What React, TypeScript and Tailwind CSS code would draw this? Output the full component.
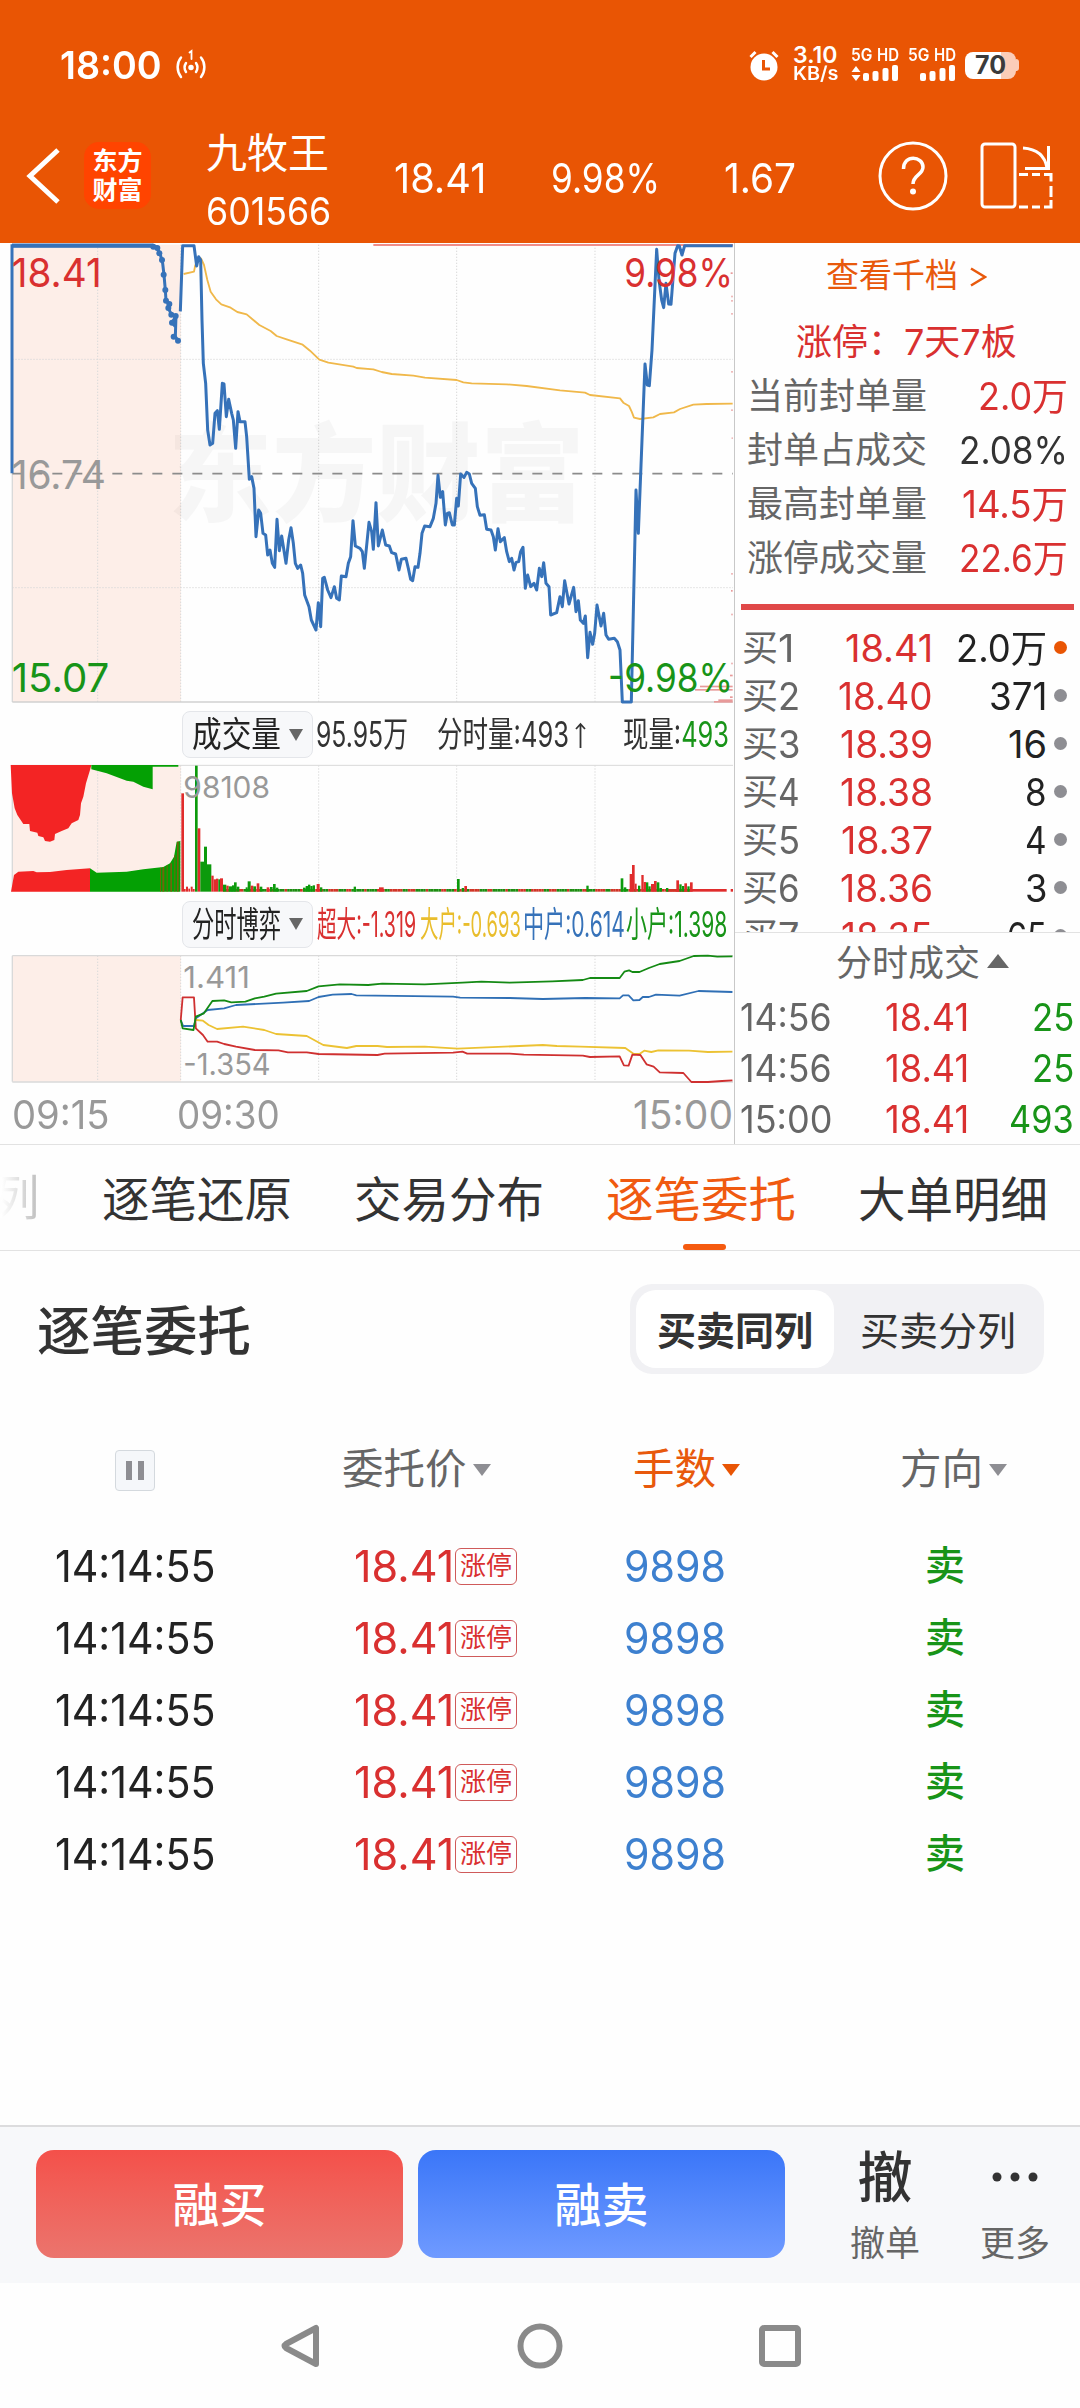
import { useLayoutEffect, useRef, useState } from 'react';
import clsx from 'clsx';

// ─── Data ─────────────────────────────────────────────────────────────────────

const SEAL_STATS = [
  { label: '当前封单量', value: '2.0万', width: 90, up: true },
  { label: '封单占成交', value: '2.08%', width: 109, up: false },
  { label: '最高封单量', value: '14.5万', width: 106, up: true },
  { label: '涨停成交量', value: '22.6万', width: 109, up: true },
];

const BIDS = [
  { level: '1', price: '18.41', pw: 88, lots: '2.0万', lw: 91 },
  { level: '2', price: '18.40', pw: 95, lots: '371', lw: 58 },
  { level: '3', price: '18.39', pw: 93, lots: '16', lw: 39 },
  { level: '4', price: '18.38', pw: 93, lots: '8', lw: 22 },
  { level: '5', price: '18.37', pw: 92, lots: '4', lw: 22 },
  { level: '6', price: '18.36', pw: 93, lots: '3', lw: 22 },
  { level: '7', price: '18.35', pw: 92, lots: '65', lw: 40 },
];

const TRADES = [
  { time: '14:56', lots: '25', lw: 42 },
  { time: '14:56', lots: '25', lw: 42 },
  { time: '15:00', lots: '493', lw: 65 },
];

const TABS = ['逐笔还原', '交易分布', '逐笔委托', '大单明细'];

const ORDERS = Array.from({ length: 5 }, (_, i) => ({ id: i, time: '14:14:55', price: '18.41', lots: '9898' }));

const AUCTION_LINE =
  '36,700 36,17 450,17 468,20 480,40 488,70 492,105 496,150 498,182 510,195 505,205 515,225 528,228 516,248 526,260 528,228 526,290 534,302';
const AUCTION_DOTS = [
  [460, 20], [472, 24], [478, 40], [486, 60], [491, 104], [496, 150], [498, 182], [508, 192],
  [505, 204], [514, 224], [527, 228], [516, 248], [521, 290], [534, 302],
];

const PRICE_LINE =
  '541,214 548,17 582,17 590,78 596,50 602,60 606,240 610,370 617,430 623,570 630,615 638,610 645,520 652,512 658,568 667,430 672,432 679,530 686,478 695,520 700,540 707,625 714,515 720,545 735,545 740,590 748,718 755,710 762,745 768,890 776,810 782,820 789,880 797,885 803,945 810,930 817,970 824,982 831,838 838,932 845,888 858,970 866,900 873,863 880,910 886,970 893,985 902,975 908,1000 914,1065 927,1100 934,1140 948,1170 955,1088 962,1160 968,1015 973,1012 983,1050 993,1073 1003,1040 1010,1075 1018,1080 1024,1008 1038,1010 1045,970 1052,950 1059,842 1066,918 1080,925 1087,935 1093,985 1107,847 1115,875 1120,928 1128,788 1135,918 1147,870 1157,915 1168,918 1175,938 1187,942 1197,990 1204,958 1218,955 1225,985 1232,1018 1238,1022 1245,980 1254,982 1260,940 1266,880 1274,858 1290,860 1300,835 1308,790 1314,706 1321,772 1328,755 1336,855 1342,820 1348,818 1357,855 1363,855 1370,775 1375,798 1382,702 1392,712 1400,697 1408,702 1415,730 1426,745 1432,800 1440,826 1453,824 1460,868 1473,870 1480,890 1486,930 1494,866 1501,905 1513,893 1520,935 1528,965 1535,955 1542,990 1548,967 1556,965 1562,935 1569,922 1576,1045 1583,1005 1592,1040 1602,1030 1610,1050 1618,985 1625,1010 1631,968 1638,1030 1647,1040 1652,1125 1670,1118 1680,1070 1687,1100 1694,1022 1707,1092 1721,1042 1728,1115 1735,1082 1741,1140 1750,1150 1756,1128 1763,1253 1770,1177 1778,1213 1784,1180 1791,1095 1803,1158 1811,1120 1818,1185 1826,1198 1843,1195 1852,1205 1860,1230 1867,1386 1894,1386 1908,750 1915,880 1935,372 1942,435 1948,437 1956,330 1970,28 1977,120 1985,180 1991,203 1998,130 2006,192 2013,193 2025,40 2033,17 2038,18 2046,45 2054,17 2198,17';

const AVERAGE_LINE =
  '551,102 582,95 586,75 603,55 612,75 622,120 632,155 648,178 664,193 692,203 712,216 740,223 760,240 778,255 812,273 830,288 860,298 908,314 930,332 958,359 985,368 1060,380 1070,384 1120,388 1145,396 1175,402 1240,407 1275,413 1370,420 1390,427 1415,430 1520,433 1580,438 1680,451 1755,458 1770,465 1860,475 1870,488 1887,498 1895,515 1902,533 1920,537 1960,532 1980,522 2022,517 2040,507 2080,494 2120,492 2198,491';

// [x, width, y] ticks of the chip distribution along the right edge
const CHIP_TICKS = [
  [2180, 18, 17], [2192, 6, 100], [2194, 4, 170], [2194, 4, 183], [2194, 4, 222], [2194, 4, 396], [2194, 4, 511],
  [2195, 3, 595], [2194, 4, 1002], [2193, 5, 1053], [2194, 4, 1124], [2194, 4, 1271], [2190, 8, 1307],
  [2100, 98, 1340], [2085, 113, 1350], [2190, 8, 1372], [2155, 43, 1381], [2142, 56, 1386],
];

// [x, top, width, colour]
const VOLUME_BARS: [number, number, number, 'r' | 'g'][] = [
  [544, 100, 8, 'r'], [552, 387, 5, 'r'], [558, 380, 6, 'r'], [565, 386, 5, 'r'], [572, 380, 6, 'r'], [578, 387, 6, 'r'],
  [585, 17, 8, 'g'], [593, 205, 8, 'r'], [601, 305, 11, 'g'], [612, 260, 9, 'g'], [621, 313, 13, 'g'],
  [634, 347, 7, 'r'], [641, 358, 7, 'r'], [648, 356, 7, 'r'], [655, 358, 5, 'g'], [660, 355, 9, 'r'],
  [669, 374, 10, 'g'], [679, 377, 7, 'r'], [686, 379, 10, 'g'], [696, 376, 6, 'g'], [702, 367, 8, 'g'], [710, 380, 8, 'g'],
  [737, 382, 6, 'g'], [743, 364, 9, 'g'], [752, 377, 8, 'r'], [760, 379, 8, 'g'], [770, 370, 8, 'r'], [779, 380, 8, 'g'],
  [800, 382, 8, 'r'], [810, 381, 8, 'g'], [819, 372, 8, 'g'], [827, 383, 8, 'g'], [909, 383, 8, 'g'], [917, 378, 7, 'g'],
  [924, 374, 7, 'g'], [931, 378, 7, 'g'], [938, 376, 7, 'g'], [950, 372, 9, 'r'], [960, 382, 7, 'g'], [1061, 380, 7, 'g'],
  [1137, 382, 14, 'r'], [1371, 357, 8, 'g'], [1385, 384, 7, 'g'], [1393, 378, 8, 'r'], [1759, 377, 7, 'g'],
  [1862, 355, 8, 'g'], [1871, 382, 8, 'g'], [1889, 342, 7, 'r'], [1896, 315, 8, 'r'], [1904, 371, 6, 'r'],
  [1914, 377, 7, 'g'], [1924, 345, 7, 'r'], [1931, 366, 7, 'r'], [1938, 367, 7, 'g'], [1945, 379, 7, 'g'], [1953, 372, 9, 'r'],
  [1962, 363, 8, 'r'], [1970, 367, 8, 'g'], [1978, 384, 8, 'g'], [1998, 384, 7, 'g'], [2029, 361, 8, 'r'], [2038, 373, 7, 'g'],
  [2046, 378, 7, 'g'], [2053, 370, 8, 'r'], [2062, 379, 7, 'g'], [2070, 367, 8, 'r'],
];

const FLOWS = [
  { color: '#2f6fb5', points: '383,390 388,408 411,408 415,385 440,360 475,355 500,345 600,338 655,333 675,321 705,314 745,312 755,316 960,320 975,323 1080,324 1150,327 1240,324 1313,325 1320,316 1332,316 1342,331 1355,330 1362,321 1375,321 1390,314 1440,317 1480,303 1552,306' },
  { color: '#ecc233', points: '415,390 430,392 442,405 460,417 515,410 560,420 585,432 650,438 685,465 735,474 755,468 800,468 820,471 900,470 970,476 1150,465 1180,468 1230,470 1325,474 1343,492 1355,492 1365,482 1380,486 1395,481 1460,482 1500,486 1552,485' },
  { color: '#cf3030', points: '383,390 387,322 411,322 415,415 430,435 440,455 460,455 475,462 500,470 540,480 590,481 610,487 650,487 675,492 800,495 815,491 960,488 980,485 990,491 1080,491 1110,494 1235,497 1250,501 1313,499 1322,526 1332,527 1340,494 1357,495 1370,523 1385,530 1398,547 1448,549 1465,576 1500,576 1530,573 1552,571' },
  { color: '#148a14', points: '383,390 387,415 410,420 415,380 432,370 450,333 475,331 490,337 520,335 540,325 560,320 585,311 650,303 675,289 720,283 780,285 810,281 900,283 980,278 1020,275 1080,278 1170,274 1235,270 1250,264 1313,264 1323,245 1333,241 1340,246 1355,246 1375,234 1398,222 1440,213 1470,198 1500,197 1520,200 1552,199' },
];

// ─── Text ─────────────────────────────────────────────────────────────────────

// Squeezes a single line of text into a fixed width, the way the quote labels do.
function Fit({ width, className, children }: { width: number; className?: string; children: React.ReactNode }) {
  const ref = useRef<HTMLSpanElement>(null);
  const [scale, setScale] = useState(1);

  useLayoutEffect(() => {
    if (ref.current) setScale(width / ref.current.offsetWidth);
  }, [width]);

  return (
    <span className={clsx('inline-block shrink-0 whitespace-nowrap text-left', className)} style={{ width }}>
      <span ref={ref} className="inline-block origin-left" style={{ transform: `scaleX(${scale})` }}>
        {children}
      </span>
    </span>
  );
}

function ChartLabel({ x, y, width, size, fill, children }: {
  x: number; y: number; width: number; size: number; fill: string; children: string;
}) {
  return (
    <text x={x} y={y} fontSize={size} fill={fill} textLength={width} lengthAdjust="spacingAndGlyphs">
      {children}
    </text>
  );
}

// ─── Header ───────────────────────────────────────────────────────────────────

function SignalBars({ data }: { data?: boolean }) {
  return (
    <div className="flex w-12 flex-col">
      <div className="flex justify-between text-[17px] leading-[14px] font-semibold">
        <Fit width={21}>5G</Fit>
        <Fit width={22}>HD</Fit>
      </div>
      <svg className="mt-[2px]" width="48" height="18" viewBox="0 0 48 18" fill="#fff">
        {data && <path d="M0.5 8 5 2l4.500 6zM0.500 11h9L5 17z" />}
        <rect x="12" y="9" width="6" height="8" rx="2" />
        <rect x="21.500" y="7" width="6" height="10" rx="2" />
        <rect x="31.500" y="4" width="6" height="13" rx="2" />
        <rect x="41" y="1" width="6" height="16" rx="2" />
      </svg>
    </div>
  );
}

function StatusBar() {
  return (
    <div className="flex h-[64px] items-center pl-[60px] text-white">
      <Fit width={102} className="text-[38px] font-semibold">18:00</Fit>
      <svg className="ml-[12px] -mt-px" width="34" height="32" viewBox="0 0 34 32" fill="none" stroke="#fff" strokeWidth="2.500" strokeLinecap="round">
        <path d="M7 8.500C2.500 14 2.500 22 7 28M12 14c-2 3-2 6 0 9M27 8.500c4.500 5.500 4.500 13.500 0 19.500M22 14c2 3 2 6 0 9" />
        <circle cx="17" cy="18.500" r="1.500" fill="#fff" />
        <path d="M15.500 3.500 17.500 2V10" strokeWidth="1.800" />
      </svg>
      <svg className="ml-[541px]" width="30" height="31" viewBox="0 0 30 31" fill="none">
        <circle cx="15" cy="17" r="13.500" fill="#fff" />
        <path d="M1.500 7 6.500 2M28.500 7l-5-5" stroke="#fff" strokeWidth="3" />
        <path d="M14.500 10v9h6.500" stroke="#e95504" strokeWidth="3" />
      </svg>
      <div className="-mt-px ml-[14px] flex w-[46px] flex-col font-semibold">
        <Fit width={44} className="text-[23px] leading-[18px]">3.10</Fit>
        <Fit width={46} className="text-[19px] leading-[20px]">KB/s</Fit>
      </div>
      <div className="ml-[12px] flex gap-[9px]">
        <SignalBars data />
        <SignalBars />
      </div>
      <div className="ml-[9px] flex items-center">
        <div className="flex h-[27px] w-[51px] items-center justify-center rounded-lg bg-linear-to-r from-white from-70% to-[#fbcdb8] to-70% text-[#3b3b3b]">
          <Fit width={31} className="text-[25px] font-bold leading-none">70</Fit>
        </div>
        <div className="h-3 w-[3px] rounded-r bg-[#fbcdb8]" />
      </div>
    </div>
  );
}

function TitleBar() {
  return (
    <div className="flex h-[135px] items-center text-[41px] text-white">
      <svg className="ml-[25px]" width="36" height="58" viewBox="0 0 36 58" fill="none" stroke="#fff" strokeWidth="5">
        <path d="M33 3 5 29l28 26" />
      </svg>
      <div className="ml-[23px] flex size-[67px] flex-col items-center justify-center rounded-[15px] bg-[#ff4400] text-[25px] font-bold leading-[29px]">
        <span>东方</span>
        <span>财富</span>
      </div>
      <div className="ml-[55px] flex w-[126px] flex-col pt-[12px] leading-[58px]">
        <span>九牧王</span>
        <Fit width={125} className="text-[38px]">601566</Fit>
      </div>
      <div className="ml-[62px] flex w-[484px] items-center pt-[6px]">
        <Fit width={92}>18.41</Fit>
        <Fit width={109} className="ml-[65px]">9.98%</Fit>
        <Fit width={72} className="ml-[64px]">1.67</Fit>
      </div>
      <svg width="70" height="70" viewBox="0 0 70 70" fill="none" stroke="#fff" strokeWidth="3">
        <circle cx="35" cy="35" r="33" />
        <path d="M25.500 28c0-15 19.500-13 19.500-2 0 8-10 8-10 17" strokeWidth="3.500" />
        <circle cx="35" cy="50.500" r="3" fill="#fff" stroke="none" />
      </svg>
      <svg className="ml-[32px]" width="74" height="68" viewBox="0 0 74 68" fill="none" stroke="#fff" strokeWidth="3">
        <rect x="2" y="2" width="33" height="63" rx="3" />
        <path d="M43 6c15 1 22 8 24 20M68.500 4v22.500H45" />
        <path d="M39 32.500h9M52 32.500h8M64 32.500h7v7M71 44v11M71 58v7h-7M60 65h-8M48 65h-9" />
      </svg>
    </div>
  );
}

// ─── Charts ───────────────────────────────────────────────────────────────────
// All three share one x scale: 3 units per pixel, plot area from 36 to 2199.

function Grid({ top, bottom }: { top: number; bottom: number }) {
  return (
    <g fill="none" stroke="#d9d9d9" strokeWidth="3">
      <rect x="37" y={top} width="506" height={bottom - top} fill="#fdeee8" stroke="none" />
      <path d={`M37 ${top}V${bottom}`} strokeWidth="4" />
      {[293, 542, 956, 1370, 1785].map((x) => (
        <path key={x} d={`M${x} ${top}V${bottom}`} strokeDasharray="4 5" />
      ))}
    </g>
  );
}

function PriceChart() {
  return (
    <svg className="block" width="734" height="462" viewBox="0 9 2202 1386">
      <Grid top={14} bottom={1386} />
      <text x="504" y="820" fontSize="320" fontWeight="900" fill="#000" opacity="0.028" textLength="1250" lengthAdjust="spacingAndGlyphs">东方财富</text>
      <g fill="none" stroke="#d9d9d9" strokeWidth="3">
        <path d="M37 358H2199M37 1043H2199" strokeDasharray="4 5" />
        <path d="M37 1386H2199" stroke="#d0d0d0" strokeWidth="5" />
        <path d="M37 701H2199" stroke="#8c8c8c" strokeWidth="5" strokeDasharray="30 30" />
        <path d="M1120 15H2199" stroke="#f08c88" strokeWidth="6" />
      </g>
      <g fill="#e89a9a">
        {CHIP_TICKS.map(([x, w, y]) => (
          <rect key={y} x={x} y={y - 3} width={w} height="5" />
        ))}
      </g>
      <polyline points={AVERAGE_LINE} fill="none" stroke="#f0b84a" strokeWidth="5.500" strokeLinejoin="round" />
      <g fill="none" stroke="#3672b9" strokeWidth="9">
        <polyline points={AUCTION_LINE} />
        <path d="M36 17H460" strokeWidth="13" />
        <polyline points={PRICE_LINE} strokeLinejoin="round" />
      </g>
      <g fill="#3672b9">
        {AUCTION_DOTS.map(([x, y]) => (
          <circle key={`${x}-${y}`} cx={x} cy={y} r="9" />
        ))}
      </g>
      <ChartLabel x={35} y={142} width={270} size={120} fill="#d93030">18.41</ChartLabel>
      <ChartLabel x={35} y={748} width={283} size={120} fill="#999">16.74</ChartLabel>
      <ChartLabel x={35} y={1357} width={293} size={120} fill="#189418">15.07</ChartLabel>
      <ChartLabel x={1873} y={142} width={326} size={120} fill="#d93030">9.98%</ChartLabel>
      <ChartLabel x={1824} y={1357} width={375} size={120} fill="#189418">-9.98%</ChartLabel>
    </svg>
  );
}

function VolumeChart() {
  // flat minutes between the named bars
  const floor = Array.from({ length: 182 }, (_, i) => ({ x: 669 + i * 7.7, red: i > 160 || (i * 7 + (i % 5) * 3) % 11 < 5 }));
  return (
    <svg className="block" width="734" height="130" viewBox="0 12 2202 390">
      <Grid top={16} bottom={394} />
      <path d="M33 16H2199" stroke="#d9d9d9" strokeWidth="3" />
      <g fill="#f32424">
        <path d="M32 15 36 100 44 145 52 165 62 180 70 192H88L90 213 112 218 115 228 130 232 135 243 150 245 163 240 165 222 185 213 205 205 215 190 235 180 240 165 243 130 250 110 258 70 270 30 274 15Z" />
        <path d="M33 395 42 345 55 335 100 333 110 337 150 336 200 330 270 325V395Z" />
      </g>
      <g fill="#04a004">
        <path d="M274 15V28L320 40 380 62 400 65 430 80 458 88V20H535V15Z" />
        <path d="M270 325 290 338 380 335 430 328 490 321 510 310 522 290 530 245 541 243V395H270Z" />
      </g>
      <path d="M480 323h3v72h-3zM487 322h6v73h-6zM500 316h3v79h-3zM511 310h5v85h-5zM523 285h3v110h-3zM531 245h5v150h-5z" fill="#a04a10" opacity="0.7" />
      <rect x="2002" y="387" width="178" height="8" fill="#e02c2c" />
      <rect x="2192" y="387" width="7" height="8" fill="#e02c2c" />
      {floor.map((b) => (
        <rect key={b.x} x={b.x} y="387" width="7.7" height="8" fill={b.red ? '#d03426' : '#1c8c10'} />
      ))}
      {VOLUME_BARS.map(([x, top, w, c]) => (
        <rect key={x} x={x} y={top} width={w} height={395 - top} fill={c === 'r' ? '#e02c2c' : '#0c9a0c'} />
      ))}
      <ChartLabel x={550} y={113} width={260} size={90} fill="#999">98108</ChartLabel>
    </svg>
  );
}

function FlowChart() {
  return (
    <svg className="block" width="734" height="130" viewBox="0 192 2202 390">
      <Grid top={197} bottom={575} />
      <path d="M37 197H2199M37 576H2199" stroke="#d9d9d9" strokeWidth="4" />
      <g transform="scale(1.4158 1)" fill="none" strokeWidth="1.800" strokeLinejoin="round">
        {FLOWS.map((f) => (
          <polyline key={f.color} points={f.points} stroke={f.color} vectorEffect="non-scaling-stroke" />
        ))}
      </g>
      <ChartLabel x={550} y={294} width={200} size={90} fill="#999">1.411</ChartLabel>
      <ChartLabel x={550} y={555} width={262} size={90} fill="#999">-1.354</ChartLabel>
    </svg>
  );
}

function IndicatorButton({ label }: { label: string }) {
  return (
    <button className="ml-[182px] flex h-[47px] w-[131px] shrink-0 items-center rounded-lg border border-[#e4e6ea] bg-[#f7f8fa] pl-[9px] text-[#222]">
      <Fit width={89}>{label}</Fit>
      <svg className="ml-[8px]" width="14" height="12" viewBox="0 0 14 12"><path d="M0 0h14L7 12z" fill="#666" /></svg>
    </button>
  );
}

function ChartPanel() {
  return (
    <div className="w-[735px] border-r border-[#c8c8c8] text-[35px] text-[#333]">
      <PriceChart />
      <div className="flex h-[59px] items-center">
        <IndicatorButton label="成交量" />
        <Fit width={92} className="ml-[3px]">95.95万</Fit>
        <Fit width={132} className="ml-[29px]">分时量:493</Fit>
        <svg className="ml-[5px]" width="13" height="26" viewBox="0 0 13 26" fill="none" stroke="#333" strokeWidth="1.800">
          <path d="M6.500 26V2M2 7l4.500-5L11 7" />
        </svg>
        <Fit width={106} className="ml-[36px]">现量:<span className="text-[#189418]">493</span></Fit>
      </div>
      <VolumeChart />
      <div className="flex h-[60px] items-center">
        <IndicatorButton label="分时博弈" />
        <Fit width={99} className="ml-[4px] text-[#d93030]">超大:-1.319</Fit>
        <Fit width={101} className="ml-[4px] text-[#e9bd2c]">大户:-0.693</Fit>
        <Fit width={102} className="ml-[2px] text-[#3672b9]">中户:0.614</Fit>
        <Fit width={101} className="ml-px text-[#189418]">小户:1.398</Fit>
      </div>
      <FlowChart />
      <div className="flex h-[60px] items-center pl-[12px] pt-[2px] text-[39px] text-[#999]">
        <Fit width={98}>09:15</Fit>
        <Fit width={103} className="ml-[67px]">09:30</Fit>
        <Fit width={100} className="ml-auto mr-px">15:00</Fit>
      </div>
    </div>
  );
}

// ─── Quote side panel ─────────────────────────────────────────────────────────

function QuotePanel() {
  return (
    <div className="flex flex-1 flex-col text-[36px] leading-none text-[#666]">
      <div className="mt-[16px] flex h-[34px] items-center pl-[91px] text-[33px] text-[#e8590c]">
        查看千档
        <svg className="ml-[12px] mt-[2px]" width="17" height="20" viewBox="0 0 17 20" fill="none" stroke="#e8590c" strokeWidth="2.500"><path d="M1 1.500 15 10 1 18.500" /></svg>
      </div>
      <div className="mt-[29px] flex h-[40px] items-center pl-[61px] text-[#d93030]">
        <Fit width={221}>涨停：7天7板</Fit>
      </div>
      <div className="mt-[7px]">
        {SEAL_STATS.map((s) => (
          <div key={s.label} className="flex h-[54px] items-center justify-between pl-[12px] pr-[12px]">
            <span>{s.label}</span>
            <Fit width={s.width} className={clsx('text-[38px]', s.up ? 'text-[#d93030]' : 'text-[#333]')}>{s.value}</Fit>
          </div>
        ))}
      </div>
      <div className="mx-[6px] mt-[19px] h-[6px] bg-[#e04848]" />
      <div className="h-[324px] overflow-hidden border-b border-[#e2e2e2] pt-[14px]">
        {BIDS.map((b, i) => (
          <div key={b.level} className="flex h-[48px] items-center pl-[7px] pr-[13px] text-[38px]">
            <span className="text-[36px]">买</span>
            <Fit width={b.level === '1' ? 16 : 22}>{b.level}</Fit>
            <div className="flex flex-1 justify-end text-[#d93030]"><Fit width={b.pw}>{b.price}</Fit></div>
            <div className="flex w-[114px] justify-end text-[#222]"><Fit width={b.lw}>{b.lots}</Fit></div>
            <span className={clsx('ml-[7px] size-[13px] rounded-full', i === 0 ? 'bg-[#e95504]' : 'bg-[#8e8e93]')} />
          </div>
        ))}
      </div>
      <div className="flex h-[58px] items-center pl-[101px] pt-px">
        分时成交
        <svg className="ml-[7px] -mt-1" width="22" height="14" viewBox="0 0 22 14"><path d="M11 0 22 14H0z" fill="#666" /></svg>
      </div>
      {TRADES.map((t, i) => (
        <div key={i} className="flex h-[51px] items-center pl-[5px] pr-[6px] text-[38px]">
          <Fit width={92}>{t.time}</Fit>
          <Fit width={84} className="ml-[53px] text-[#d93030]">18.41</Fit>
          <Fit width={t.lw} className="ml-auto text-[#189418]">{t.lots}</Fit>
        </div>
      ))}
    </div>
  );
}

// ─── Tick orders ──────────────────────────────────────────────────────────────

function TabBar() {
  return (
    <div className="flex h-[107px] overflow-hidden border-y border-[#e2e2e2] text-[47.5px] leading-none text-[#333]">
      <span className="flex w-[102px] shrink-0 items-center">
        <span className="-ml-[8px] bg-linear-to-r from-white from-20% to-[#bbb] bg-clip-text text-transparent">列</span>
      </span>
      {TABS.map((tab) => {
        const active = tab === '逐笔委托';
        return (
          <div key={tab} className={clsx('flex w-[252px] shrink-0 flex-col', active && 'text-[#f05a10]')}>
            <span className="mt-[31px] h-[50px]">{tab}</span>
            {active && <span className="ml-[77px] mt-[18px] h-[6px] w-[43px] rounded-full bg-[#f55a0f]" />}
          </div>
        );
      })}
    </div>
  );
}

function SortHeader({ label, active }: { label: string; active?: boolean }) {
  return (
    <div className={clsx('flex items-center', active ? 'text-[#e8590c]' : 'text-[#666]')}>
      {label}
      <svg className="ml-[6px]" width="18" height="12" viewBox="0 0 18 12"><path d="M0 0h18L9 12z" fill={active ? '#e95504' : '#8e8e93'} /></svg>
    </div>
  );
}

const COLUMNS = 'grid grid-cols-[342px_291px_267px_180px] items-center';

function OrderTable() {
  return (
    <section className="h-[874px] leading-none">
      <div className="flex items-center justify-between pl-[37px] pr-[36px] pt-[33px]">
        <h2 className="pt-[5px] text-[53.5px] font-medium text-[#333]">逐笔委托</h2>
        <div className="flex h-[90px] w-[414px] rounded-[22px] bg-[#f1f1f4] p-[6px] text-[39px] text-[#333]">
          <button className="w-[198px] rounded-[20px] bg-white pt-[2px] font-bold">买卖同列</button>
          <button className="flex-1 pl-1 pt-[2px]">买卖分列</button>
        </div>
      </div>

      <div className={clsx(COLUMNS, 'mt-[64px] h-[64px] text-[41.5px]')}>
        <div className="ml-[115px] flex h-[41px] w-[40px] items-center justify-center gap-[6px] rounded border border-[#d4d9de] bg-[#f5f7fa]">
          <span className="h-[19px] w-[6px] bg-[#8e8e93]" />
          <span className="h-[19px] w-[6px] bg-[#8e8e93]" />
        </div>
        <SortHeader label="委托价" />
        <SortHeader label="手数" active />
        <SortHeader label="方向" />
      </div>

      <div className="mt-[28px] text-[44px]">
        {ORDERS.map((o) => (
          <div key={o.id} className={clsx(COLUMNS, 'h-[72px]')}>
            <Fit width={161} className="ml-[55px] text-[#222]">{o.time}</Fit>
            <div className="flex items-center pl-[12px] text-[#d93030]">
              <Fit width={100}>{o.price}</Fit>
              <span className="ml-px flex h-[37px] w-[62px] items-center justify-center rounded-md border border-[#cf5a5a] text-[26px]">涨停</span>
            </div>
            <Fit width={102} className="-ml-[9px] text-[#3d80cf]">{o.lots}</Fit>
            <span className="pl-[25px] text-[40px] font-medium text-[#189418]">卖</span>
          </div>
        ))}
      </div>
    </section>
  );
}

// ─── Bottom ───────────────────────────────────────────────────────────────────

function ActionBar() {
  return (
    <div className="flex h-[158px] border-t-2 border-[#dcdcde] bg-[#f7f8fa] pl-[36px] pt-[23px] leading-none">
      <button className="h-[108px] w-[367px] rounded-[18px] bg-linear-to-b from-[#f4504a] to-[#eb746d] text-[47px] font-medium text-white">融买</button>
      <button className="ml-[15px] h-[108px] w-[367px] rounded-[18px] bg-linear-to-b from-[#3a76f8] to-[#6f9aff] text-[47px] font-medium text-white">融卖</button>
      <div className="ml-[50px] flex w-[100px] flex-col items-center text-[35px] text-[#666]">
        <span className="text-[55px] font-medium text-[#333]">撤</span>
        <span className="mt-[21px]">撤单</span>
      </div>
      <div className="ml-[30px] flex w-[100px] flex-col items-center text-[35px] text-[#666]">
        <svg width="48" height="55" viewBox="0 0 48 55" fill="#333">
          <circle cx="6" cy="27" r="4.500" />
          <circle cx="24" cy="27" r="4.500" />
          <circle cx="42" cy="27" r="4.500" />
        </svg>
        <span className="mt-[21px]">更多</span>
      </div>
    </div>
  );
}

function NavBar() {
  return (
    <div className="flex h-[126px] items-center justify-between bg-[#fefefe] pb-px pl-[278px] pr-[278px]">
      <svg width="44" height="44" viewBox="0 0 44 44" fill="none" stroke="#8a8a8a" strokeWidth="6" strokeLinejoin="round">
        <path d="M38 4v36L8 24q-3-2 0-4z" />
      </svg>
      <svg width="46" height="46" viewBox="0 0 46 46" fill="none" stroke="#8a8a8a" strokeWidth="6">
        <circle cx="23" cy="23" r="19.500" />
      </svg>
      <svg width="44" height="44" viewBox="0 0 44 44" fill="none" stroke="#8a8a8a" strokeWidth="6">
        <rect x="4" y="4" width="36" height="36" rx="2" />
      </svg>
    </div>
  );
}

export default function App() {
  return (
    <div className="w-[1080px] overflow-hidden bg-[#fefefe] font-[Inter,'Noto_Sans_CJK_SC',sans-serif]">
      <header className="h-[243px] bg-[#e95504] pt-[33px]">
        <StatusBar />
        <div className="mt-[11px]">
          <TitleBar />
        </div>
      </header>
      <div className="flex h-[901px]">
        <ChartPanel />
        <QuotePanel />
      </div>
      <TabBar />
      <OrderTable />
      <ActionBar />
      <NavBar />
    </div>
  );
}
